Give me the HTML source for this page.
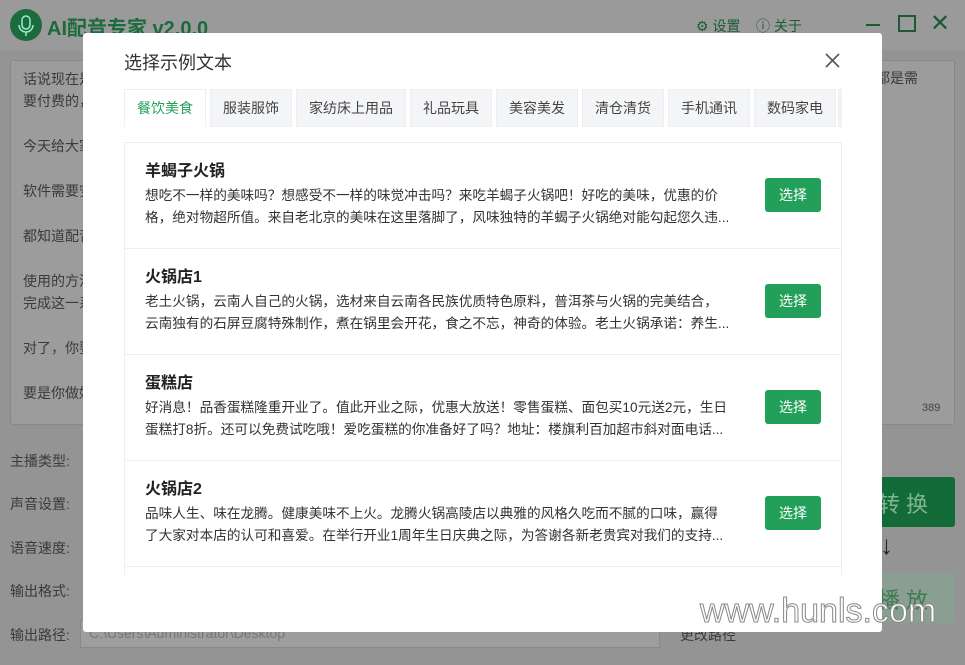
<!DOCTYPE html>
<html><head><meta charset="utf-8"><style>
*{margin:0;padding:0;box-sizing:border-box}
body{width:965px;height:665px;overflow:hidden;position:relative;background:#949494;font-family:"Liberation Sans","Noto Sans CJK SC",sans-serif;color:#2a2a2a}
.abs{position:absolute}
.bgt{color:#3a3a3a;font-size:14px}
.modal{position:absolute;left:83px;top:33px;width:799px;height:599px;background:#fff;border-radius:3px}
.tab{position:absolute;top:89px;height:38px;background:#f4f5f7;border:1px solid #eceef1;font-size:14px;color:#444;text-align:center;line-height:36px}
.list{position:absolute;left:124px;top:142px;width:718px;height:433px;overflow:hidden;border-left:1px solid #eee;border-right:1px solid #eee;border-top:1px solid #eee}
.item{height:106px;border-bottom:1px solid #eee;position:relative}
.item h3{position:absolute;left:20px;top:14px;font-size:16px;font-weight:bold;color:#222}
.item .d{position:absolute;left:20px;top:42px;width:605px;font-size:13.65px;line-height:22px;color:#333}
.d div{white-space:nowrap;overflow:hidden}
.btn{position:absolute;left:640px;top:35px;width:56px;height:34px;background:#22a05a;color:#fff;border-radius:3px;font-size:14px;text-align:center;line-height:34px}
</style></head><body>
<div class="abs" style="left:0;top:0;width:965px;height:50px;background:#9a9a9a"></div>
<div class="abs" style="left:10px;top:9px;width:32px;height:32px;border-radius:50%;background:#1b6b3c"></div>
<svg class="abs" style="left:10px;top:9px" width="32" height="32"><rect x="12" y="7" width="8" height="13" rx="4" fill="none" stroke="#9ec" stroke-width="1.5"/><path d="M9 16a7 7 0 0 0 14 0M16 23v4" fill="none" stroke="#9ec" stroke-width="1.5"/></svg>
<div class="abs" style="left:47px;top:12px;font-size:20px;font-weight:bold;color:#1b6b3c">AI配音专家 v2.0.0</div>
<div class="abs" style="left:696px;top:16px;font-size:14px;color:#1b5b34">⚙ 设置 &nbsp;&nbsp; ⓘ 关于</div>
<div class="abs" style="left:866px;top:24px;width:14px;height:1.5px;background:#1b5b34"></div>
<div class="abs" style="left:898px;top:15px;width:18px;height:17px;border:2px solid #1b5b34"></div>
<div class="abs" style="left:930px;top:9px;font-size:24px;color:#1b5b34">✕</div>
<div class="abs" style="left:10px;top:60px;width:945px;height:365px;background:#9c9c9c;border:1px solid #888;border-radius:3px"></div>
<div class="abs bgt" style="left:23px;top:68px;line-height:22px">话说现在是<br>要付费的，</div>
<div class="abs bgt" style="left:876px;top:68px">都是需</div>
<div class="abs bgt" style="left:23px;top:136px">今天给大家</div>
<div class="abs bgt" style="left:23px;top:181px">软件需要安</div>
<div class="abs bgt" style="left:23px;top:226px">都知道配音</div>
<div class="abs bgt" style="left:23px;top:270px;line-height:22px">使用的方法<br>完成这一系</div>
<div class="abs bgt" style="left:23px;top:338px">对了，你要</div>
<div class="abs bgt" style="left:23px;top:383px">要是你做好</div>
<div class="abs" style="left:922px;top:402px;font-size:11px;color:#444">389</div>
<div class="abs bgt" style="left:10px;top:451px">主播类型:</div>
<div class="abs bgt" style="left:10px;top:494px">声音设置:</div>
<div class="abs bgt" style="left:10px;top:538px">语音速度:</div>
<div class="abs bgt" style="left:10px;top:581px">输出格式:</div>
<div class="abs bgt" style="left:10px;top:625px">输出路径:</div>
<div class="abs" style="left:80px;top:620px;width:580px;height:28px;background:#9e9e9e;border:1px solid #888;font-size:14px;color:#777;padding:4px 8px">C:\Users\Administrator\Desktop</div>
<div class="abs bgt" style="left:680px;top:625px">更改路径</div>
<div class="abs" style="left:870px;top:477px;width:85px;height:50px;background:#136b37;border-radius:3px"></div>
<div class="abs" style="left:878px;top:487px;font-size:22px;color:#7fb593;letter-spacing:6px">转换</div>
<div class="abs" style="left:880px;top:530px;font-size:26px;font-weight:bold;color:#222">↓</div>
<div class="abs" style="left:870px;top:573px;width:85px;height:50px;background:#8a9f92;border-radius:3px"></div>
<div class="abs" style="left:878px;top:583px;font-size:22px;color:#3d7a52;letter-spacing:6px">播放</div>

<div class="modal"></div>
<div class="abs" style="left:124px;top:49px;font-size:18px;color:#333">选择示例文本</div>
<svg class="abs" style="left:825px;top:53px" width="15" height="15"><path d="M1 1L14 14M14 1L1 14" stroke="#555" stroke-width="1.6"/></svg>
<div class="tab" style="left:124px;width:82px;background:#fff;color:#22a05a;border-bottom-color:#fff">餐饮美食</div>
<div class="tab" style="left:210px;width:82px">服装服饰</div>
<div class="tab" style="left:296px;width:110px">家纺床上用品</div>
<div class="tab" style="left:410px;width:82px">礼品玩具</div>
<div class="tab" style="left:496px;width:82px">美容美发</div>
<div class="tab" style="left:582px;width:82px">清仓清货</div>
<div class="tab" style="left:668px;width:82px">手机通讯</div>
<div class="tab" style="left:754px;width:82px">数码家电</div>
<div class="tab" style="left:838px;width:4px"></div>
<div class="list">
<div class="item"><h3>羊蝎子火锅</h3><div class="d"><div>想吃不一样的美味吗？想感受不一样的味觉冲击吗？来吃羊蝎子火锅吧！好吃的美味，优惠的价</div><div>格，绝对物超所值。来自老北京的美味在这里落脚了，风味独特的羊蝎子火锅绝对能勾起您久违...</div></div><div class="btn">选择</div></div>
<div class="item"><h3>火锅店1</h3><div class="d"><div>老土火锅，云南人自己的火锅，选材来自云南各民族优质特色原料，普洱茶与火锅的完美结合，</div><div>云南独有的石屏豆腐特殊制作，煮在锅里会开花，食之不忘，神奇的体验。老土火锅承诺：养生...</div></div><div class="btn">选择</div></div>
<div class="item"><h3>蛋糕店</h3><div class="d"><div>好消息！品香蛋糕隆重开业了。值此开业之际，优惠大放送！零售蛋糕、面包买10元送2元，生日</div><div>蛋糕打8折。还可以免费试吃哦！爱吃蛋糕的你准备好了吗？地址：楼旗利百加超市斜对面电话...</div></div><div class="btn">选择</div></div>
<div class="item"><h3>火锅店2</h3><div class="d"><div>品味人生、味在龙腾。健康美味不上火。龙腾火锅高陵店以典雅的风格久吃而不腻的口味，赢得</div><div>了大家对本店的认可和喜爱。在举行开业1周年生日庆典之际，为答谢各新老贵宾对我们的支持...</div></div><div class="btn">选择</div></div>
</div>
<svg class="abs" style="left:690px;top:585px" width="270" height="50"><text x="10" y="37" font-family="Liberation Sans,sans-serif" font-size="34" fill="#fff" stroke="#888" stroke-width="1">www.hunls.com</text></svg>
</body></html>
